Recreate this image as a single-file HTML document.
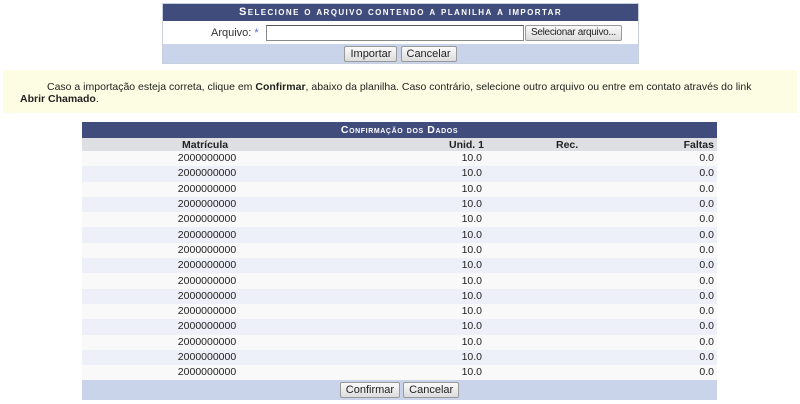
<!DOCTYPE html>
<html><head><meta charset="utf-8"><style>
body{margin:0;width:800px;height:404px;background:#fff;font-family:"Liberation Sans",Verdana,sans-serif;font-size:11px;color:#222;position:relative;overflow:hidden}
.box{position:absolute;left:162px;top:3px;width:475px;height:59px;border:1px solid #c8d0e0;background:#fff}
.hd{background:#404c7c;color:#fff;height:17px;line-height:17px;text-align:center;font-weight:bold;font-size:11px;letter-spacing:1.4px;font-variant:small-caps}
.ft{background:#c9d3ea;position:absolute;left:0;right:0;bottom:0;height:19px;text-align:center}
.btn{display:inline-block;border:1px solid #999;background:linear-gradient(#fafafa,#ddd);border-radius:2px;font-size:11px;padding:0 5px;height:14px;line-height:14px;margin-top:2px}
.msg{position:absolute;left:3px;top:70px;width:794px;height:43px;background:#fdfde3;font-size:10.5px;line-height:12px}
.tbl{position:absolute;left:82px;top:122px;width:635px;border-collapse:collapse}
.tbl td{height:15.3px;padding:0 3px;font-size:10.5px;line-height:15px}
.tbl tr:nth-child(odd) td{background:#f9f9f9}
.tbl tr:nth-child(even) td{background:#edf0f8}
</style></head><body>
<div class="box">
<div class="hd">Selecione o arquivo contendo a planilha a importar</div>
<div style="position:absolute;top:23px;left:48px;color:#333">Arquivo: <span style="color:#4a70c0">*</span></div>
<div style="position:absolute;top:21px;left:103px;width:256px;height:14px;border:1px solid #888;border-top-color:#555;background:#fff"></div>
<div class="btn" style="position:absolute;top:19px;left:362px;font-size:10px;letter-spacing:-.3px">Selecionar arquivo...</div>
<div class="ft"><span class="btn">Importar</span> <span class="btn">Cancelar</span></div>
</div>
<div class="msg"><div style="position:absolute;left:44px;top:11px;white-space:nowrap">Caso a importação esteja correta, clique em <b>Confirmar</b>, abaixo da planilha. Caso contrário, selecione outro arquivo ou entre em contato através do link</div><div style="position:absolute;left:17px;top:23px"><b>Abrir Chamado</b>.</div></div>
<div style="position:absolute;left:82px;top:122px;width:635px;height:278px;background:#c9d3ea"></div>
<div style="position:absolute;left:82px;top:122px;width:635px;height:16px;background:#404c7c;color:#fff;text-align:center;line-height:16px;font-weight:bold;font-size:10.5px;letter-spacing:.6px;font-variant:small-caps">Confirmação dos Dados</div>
<div style="position:absolute;left:82px;top:138px;width:635px;height:14px;background:#dedfe3;font-weight:bold;font-size:10.5px;line-height:14px">
<span style="position:absolute;left:100px">Matrícula</span><span style="position:absolute;right:233px">Unid. 1</span><span style="position:absolute;left:474px">Rec.</span><span style="position:absolute;right:3px">Faltas</span></div>
<table class="tbl" style="top:151px">
<colgroup><col style="width:250px"><col style="width:153px"><col style="width:100px"><col></colgroup>
<tr><td style="text-align:center">2000000000</td><td style="text-align:right">10.0</td><td></td><td style="text-align:right">0.0</td></tr>
<tr><td style="text-align:center">2000000000</td><td style="text-align:right">10.0</td><td></td><td style="text-align:right">0.0</td></tr>
<tr><td style="text-align:center">2000000000</td><td style="text-align:right">10.0</td><td></td><td style="text-align:right">0.0</td></tr>
<tr><td style="text-align:center">2000000000</td><td style="text-align:right">10.0</td><td></td><td style="text-align:right">0.0</td></tr>
<tr><td style="text-align:center">2000000000</td><td style="text-align:right">10.0</td><td></td><td style="text-align:right">0.0</td></tr>
<tr><td style="text-align:center">2000000000</td><td style="text-align:right">10.0</td><td></td><td style="text-align:right">0.0</td></tr>
<tr><td style="text-align:center">2000000000</td><td style="text-align:right">10.0</td><td></td><td style="text-align:right">0.0</td></tr>
<tr><td style="text-align:center">2000000000</td><td style="text-align:right">10.0</td><td></td><td style="text-align:right">0.0</td></tr>
<tr><td style="text-align:center">2000000000</td><td style="text-align:right">10.0</td><td></td><td style="text-align:right">0.0</td></tr>
<tr><td style="text-align:center">2000000000</td><td style="text-align:right">10.0</td><td></td><td style="text-align:right">0.0</td></tr>
<tr><td style="text-align:center">2000000000</td><td style="text-align:right">10.0</td><td></td><td style="text-align:right">0.0</td></tr>
<tr><td style="text-align:center">2000000000</td><td style="text-align:right">10.0</td><td></td><td style="text-align:right">0.0</td></tr>
<tr><td style="text-align:center">2000000000</td><td style="text-align:right">10.0</td><td></td><td style="text-align:right">0.0</td></tr>
<tr><td style="text-align:center">2000000000</td><td style="text-align:right">10.0</td><td></td><td style="text-align:right">0.0</td></tr>
<tr><td style="text-align:center">2000000000</td><td style="text-align:right">10.0</td><td></td><td style="text-align:right">0.0</td></tr>
</table>
<div style="position:absolute;left:82px;top:382px;width:635px;text-align:center"><span class="btn" style="margin-top:0">Confirmar</span> <span class="btn" style="margin-top:0">Cancelar</span></div>
</body></html>
